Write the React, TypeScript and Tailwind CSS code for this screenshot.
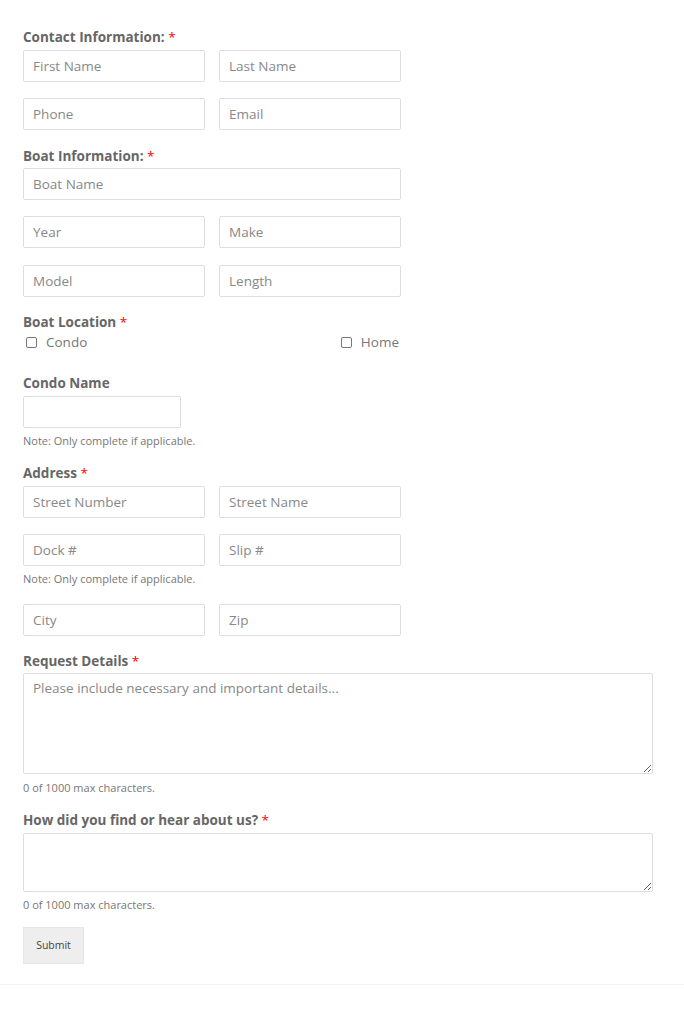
import React from "react";

const font = { fontFamily: '"Open Sans", "Noto Sans", sans-serif' };

const Label = ({ text, colon = false, req = true, className = "" }: any) => (
  <div className={`text-[13.5px] leading-5 font-bold text-[#666] ${className}`}>
    {text}
    {colon ? ":" : ""}
    {req && <span className="text-[#f00] font-normal"> *</span>}
  </div>
);

const Input = ({ placeholder = "", className = "" }: any) => (
  <input
    type="text"
    placeholder={placeholder}
    className={`h-[32px] border border-[#ddd] rounded-[2px] px-[9px] text-[13.5px] text-[#666] placeholder:text-[#888] outline-none bg-white ${className}`}
  />
);

const Row = ({ a, b, className = "" }: any) => (
  <div className={`flex gap-[14px] w-[378px] ${className}`}>
    <Input placeholder={a} className="w-[182px]" />
    <Input placeholder={b} className="w-[182px]" />
  </div>
);

const Note = ({ text, className = "" }: any) => (
  <div className={`text-[11px] leading-[14px] text-[#777] ${className}`}>{text}</div>
);

const Check = ({ label }: any) => (
  <label className="flex items-center gap-[9px] text-[13.5px] text-[#777]">
    <span className="w-[11px] h-[11px] border border-[#777] rounded-[2px] bg-white" />
    {label}
  </label>
);

export default function App() {
  return (
    <div style={font} className="w-[684px] min-h-[1024px] bg-white">
      <form className="pl-[23px] pt-[27px]">
        <Label text="Contact Information" colon className="mb-[3px]" />
        <Row a="First Name" b="Last Name" />
        <Row a="Phone" b="Email" className="mt-[16px]" />

        <Label text="Boat Information" colon className="mt-[16px] mb-[2px]" />
        <Input placeholder="Boat Name" className="w-[378px] block" />
        <Row a="Year" b="Make" className="mt-[16px]" />
        <Row a="Model" b="Length" className="mt-[17px]" />

        <Label text="Boat Location" className="mt-[15px]" />
        <div className="flex justify-between w-[376px] h-[20px] pl-[3px]">
          <Check label="Condo" />
          <Check label="Home" />
        </div>

        <Label text="Condo Name" req={false} className="mt-[21px] mb-[3px]" />
        <Input className="w-[158px] block" />
        <Note text="Note: Only complete if applicable." className="mt-[6px]" />

        <Label text="Address" className="mt-[15px] mb-[3px]" />
        <Row a="Street Number" b="Street Name" />
        <Row a="Dock #" b="Slip #" className="mt-[16px]" />
        <Note text="Note: Only complete if applicable." className="mt-[6px]" />
        <Row a="City" b="Zip" className="mt-[18px]" />

        <Label text="Request Details" className="mt-[15px] mb-[2px]" />
        <textarea
          placeholder="Please include necessary and important details..."
          className="block w-[630px] h-[101px] border border-[#ddd] rounded-[2px] px-[9px] py-[4px] text-[13.5px] leading-5 text-[#666] placeholder:text-[#888] outline-none"
        />
        <Note text="0 of 1000 max characters." className="mt-[7px]" />

        <Label text="How did you find or hear about us?" className="mt-[15px] mb-[3px]" />
        <textarea className="block w-[630px] h-[59px] border border-[#ddd] rounded-[2px] px-[9px] py-[4px] text-[13.5px] text-[#666] outline-none" />
        <Note text="0 of 1000 max characters." className="mt-[6px]" />

        <button
          type="button"
          className="mt-[15px] w-[61px] h-[37px] bg-[#eee] border border-[#e6e6e6] text-[10.5px] text-[#444]"
        >
          Submit
        </button>
      </form>
      <div className="mt-[20px] border-t border-[#f2f2f2]" />
    </div>
  );
}
